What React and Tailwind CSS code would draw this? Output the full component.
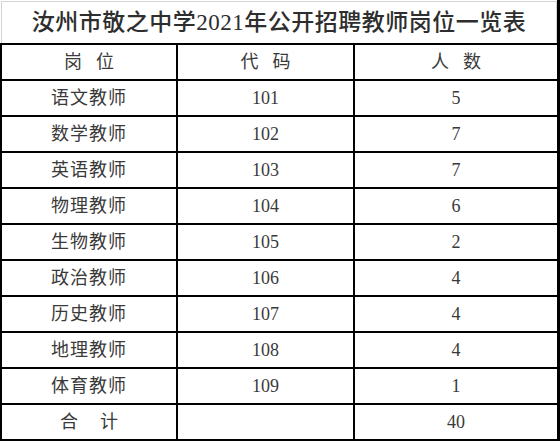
import React from "react";

const rows = [
  ["语文教师", "101", "5"],
  ["数学教师", "102", "7"],
  ["英语教师", "103", "7"],
  ["物理教师", "104", "6"],
  ["生物教师", "105", "2"],
  ["政治教师", "106", "4"],
  ["历史教师", "107", "4"],
  ["地理教师", "108", "4"],
  ["体育教师", "109", "1"],
];

const font = { fontFamily: '"Liberation Serif", "Noto Sans CJK SC", serif' };

const Cell = ({ children, last }) => (
  <div
    className={`h-[36px] flex items-center justify-center border-b-2 border-black text-[18px] text-[#3a3a3a] ${
      last ? "border-r-[3px]" : "border-r-2"
    }`}
  >
    {children}
  </div>
);

export default function App() {
  return (
    <div className="w-[560px] h-[441px] bg-white overflow-hidden" style={font}>
      {/* Title */}
      <div className="h-[43px] pt-[1px] pl-[1px] border-r-[3px] border-black">
        <div className="h-full border-t border-l border-r border-[#d4d4d4] flex items-center justify-center text-[23px] font-medium text-[#2e2e2e] tracking-[0.5px] pt-[2px]">
          汝州市敬之中学2021年公开招聘教师岗位一览表
        </div>
      </div>

      {/* Table */}
      <div className="grid grid-cols-[176px_177px_1fr] border-t-2 border-l-2 border-black">
        <Cell>
          <span className="tracking-[14px] pl-[14px]">岗位</span>
        </Cell>
        <Cell>
          <span className="tracking-[14px] pl-[14px]">代码</span>
        </Cell>
        <Cell last>
          <span className="tracking-[14px] pl-[14px]">人数</span>
        </Cell>

        {rows.map(([name, code, count]) => (
          <React.Fragment key={code}>
            <Cell>
              <span className="tracking-[1px]">{name}</span>
            </Cell>
            <Cell>{code}</Cell>
            <Cell last>{count}</Cell>
          </React.Fragment>
        ))}

        <Cell>
          <span className="tracking-[22px] pl-[22px]">合计</span>
        </Cell>
        <Cell></Cell>
        <Cell last>40</Cell>
      </div>
    </div>
  );
}
